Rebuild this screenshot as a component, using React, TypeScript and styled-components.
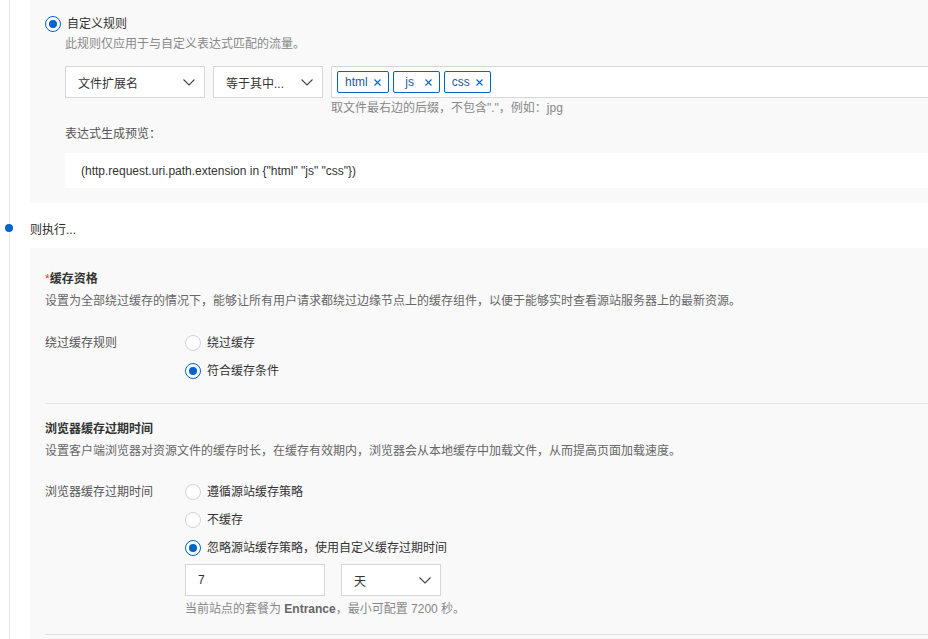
import React from "react";
import styled, { createGlobalStyle } from "styled-components";

const GlobalStyle = createGlobalStyle`
  html, body {
    margin: 0;
    padding: 0;
    background: #ffffff;
    overflow: hidden;
  }
  body {
    font-family: "Liberation Sans", "Noto Sans CJK SC", "Microsoft YaHei", sans-serif;
    font-size: 12px;
    color: #333333;
  }
`;

const BLUE = "#0064c8";

const Page = styled.div`
  width: 980px;
  min-height: 639px;
  display: flex;
  flex-direction: column;
  background: linear-gradient(
    to right,
    transparent 9px,
    #e4e4e4 9px,
    #e4e4e4 10px,
    transparent 10px
  );
  & > * {
    flex-shrink: 0;
  }
`;

const Panel = styled.section<{ $pt: number; $pb: number; $mt?: number }>`
  margin-left: 30px;
  margin-top: ${(p) => p.$mt ?? 0}px;
  background: #f9f9f9;
  padding: ${(p) => p.$pt}px 0 ${(p) => p.$pb}px 15px;
  display: flex;
  flex-direction: column;
  flex-grow: ${(p) => (p.$pb === 0 ? 1 : 0)};
`;

const RadioRow = styled.label`
  display: flex;
  align-items: center;
  gap: 6px;
  height: 20px;
  line-height: 20px;
  color: #333333;
`;

const RadioCircle = styled.span<{ $checked?: boolean }>`
  box-sizing: border-box;
  width: 16px;
  height: 16px;
  border-radius: 50%;
  border: 1px solid ${(p) => (p.$checked ? BLUE : "#d2d2d2")};
  background: #ffffff;
  display: inline-flex;
  align-items: center;
  justify-content: center;
  flex: none;
  &::after {
    content: "";
    width: 8px;
    height: 8px;
    border-radius: 50%;
    background: ${BLUE};
    display: ${(p) => (p.$checked ? "block" : "none")};
  }
`;

const Indented = styled.div`
  padding-left: 20px;
  display: flex;
  flex-direction: column;
`;

const Muted = styled.div<{ $color?: string; $lh?: number; $mt?: number }>`
  color: ${(p) => p.$color ?? "#888888"};
  line-height: ${(p) => p.$lh ?? 20}px;
  margin-top: ${(p) => p.$mt ?? 0}px;
  white-space: nowrap;
`;

const FilterRow = styled.div`
  margin-top: 12px;
  display: flex;
  gap: 8px;
  align-items: flex-start;
`;

const SelectBox = styled.div<{ $w: number }>`
  box-sizing: border-box;
  width: ${(p) => p.$w}px;
  height: 32px;
  border: 1px solid #d6d6d6;
  background: #ffffff;
  display: flex;
  align-items: center;
  justify-content: space-between;
  padding: 0 9px 0 12px;
  color: #333333;
  flex: none;
`;

const TagColumn = styled.div`
  flex: 1;
  display: flex;
  flex-direction: column;
`;

const TagBox = styled.div`
  box-sizing: border-box;
  height: 32px;
  border: 1px solid #d6d6d6;
  background: #ffffff;
  display: flex;
  align-items: center;
  gap: 4px;
  padding-left: 5px;
`;

const Tag = styled.span`
  box-sizing: border-box;
  height: 22px;
  border: 1px solid ${BLUE};
  border-radius: 2px;
  display: inline-flex;
  align-items: center;
  padding: 0 7px 0 7px;
  color: #1f5a9a;
  line-height: 20px;
`;

const TagText = styled.span`
  min-width: 18px;
  text-align: center;
`;

const TagClose = styled.svg`
  margin-left: 6px;
  flex: none;
`;

const PreviewBox = styled.div`
  margin-top: 9px;
  height: 35px;
  background: #ffffff;
  display: flex;
  align-items: center;
  padding-left: 16px;
  color: #333333;
  white-space: nowrap;
`;

const StepHeader = styled.div`
  margin-top: 15px;
  height: 20px;
  display: flex;
  align-items: center;
  gap: 17px;
  color: #2b2b2b;
`;

const Dot = styled.span`
  margin-left: 5px;
  width: 8px;
  height: 8px;
  border-radius: 50%;
  background: ${BLUE};
  flex: none;
`;

const Title = styled.div<{ $mt?: number }>`
  margin-top: ${(p) => p.$mt ?? 0}px;
  line-height: 22px;
  font-weight: 700;
  color: #333333;
`;

const Required = styled.span`
  color: #e33d3d;
  font-weight: 400;
`;

const FormRow = styled.div<{ $mt: number }>`
  margin-top: ${(p) => p.$mt}px;
  display: flex;
  align-items: flex-start;
`;

const FieldLabel = styled.div`
  width: 140px;
  line-height: 20px;
  color: #555555;
  flex: none;
`;

const RadioGroup = styled.div`
  display: flex;
  flex-direction: column;
  & > label + label {
    margin-top: 8px;
  }
`;

const Divider = styled.div<{ $mt: number }>`
  margin-top: ${(p) => p.$mt}px;
  height: 1px;
  background: #e4e4e4;
`;

const CustomExpiry = styled.div`
  margin-top: 6px;
  display: flex;
  flex-direction: column;
`;

const InputRow = styled.div`
  display: flex;
  gap: 16px;
`;

const TextInput = styled.div`
  box-sizing: border-box;
  width: 140px;
  height: 32px;
  border: 1px solid #d6d6d6;
  background: #ffffff;
  display: flex;
  align-items: center;
  padding-left: 12px;
  color: #333333;
`;

const Strong = styled.b`
  font-weight: 700;
  color: #666666;
`;

const Chevron = () => (
  <svg width="12" height="12" viewBox="0 0 12 12">
    <path d="M0.5 3.5 L6 9 L11.5 3.5" fill="none" stroke="#444" strokeWidth="1.1" />
  </svg>
);

const Close = () => (
  <TagClose width="7" height="7" viewBox="0 0 7 7">
    <path d="M0.5 0.5 L6.5 6.5 M6.5 0.5 L0.5 6.5" stroke={BLUE} strokeWidth="1.1" />
  </TagClose>
);

const Radio = ({ checked, children }: { checked?: boolean; children: React.ReactNode }) => (
  <RadioRow>
    <RadioCircle $checked={checked} />
    <span>{children}</span>
  </RadioRow>
);

export default function App() {
  return (
    <>
      <GlobalStyle />
      <Page>
        <Panel $pt={14} $pb={15}>
          <Radio checked>自定义规则</Radio>
          <Indented>
            <Muted>此规则仅应用于与自定义表达式匹配的流量。</Muted>
            <FilterRow>
              <SelectBox $w={140}>
                <span>文件扩展名</span>
                <Chevron />
              </SelectBox>
              <SelectBox $w={110}>
                <span>等于其中...</span>
                <Chevron />
              </SelectBox>
              <TagColumn>
                <TagBox>
                  {["html", "js", "css"].map((t) => (
                    <Tag key={t}>
                      <TagText>{t}</TagText>
                      <Close />
                    </Tag>
                  ))}
                </TagBox>
                <Muted>取文件最右边的后缀，不包含"."，例如：jpg</Muted>
              </TagColumn>
            </FilterRow>
            <Muted $color="#555555" $mt={6}>
              表达式生成预览：
            </Muted>
            <PreviewBox>(http.request.uri.path.extension in {'{"html" "js" "css"}'})</PreviewBox>
          </Indented>
        </Panel>

        <StepHeader>
          <Dot />
          <span>则执行...</span>
        </StepHeader>

        <Panel $pt={20} $pb={0} $mt={10}>
          <Title>
            <Required>*</Required>缓存资格
          </Title>
          <Muted $color="#666666" $lh={22}>
            设置为全部绕过缓存的情况下，能够让所有用户请求都绕过边缘节点上的缓存组件，以便于能够实时查看源站服务器上的最新资源。
          </Muted>
          <FormRow $mt={21}>
            <FieldLabel>绕过缓存规则</FieldLabel>
            <RadioGroup>
              <Radio>绕过缓存</Radio>
              <Radio checked>符合缓存条件</Radio>
            </RadioGroup>
          </FormRow>
          <Divider $mt={22} />
          <Title $mt={14}>浏览器缓存过期时间</Title>
          <Muted $color="#666666" $lh={22}>
            设置客户端浏览器对资源文件的缓存时长，在缓存有效期内，浏览器会从本地缓存中加载文件，从而提高页面加载速度。
          </Muted>
          <FormRow $mt={20}>
            <FieldLabel>浏览器缓存过期时间</FieldLabel>
            <RadioGroup>
              <Radio>遵循源站缓存策略</Radio>
              <Radio>不缓存</Radio>
              <Radio checked>忽略源站缓存策略，使用自定义缓存过期时间</Radio>
              <CustomExpiry>
                <InputRow>
                  <TextInput>7</TextInput>
                  <SelectBox $w={100}>
                    <span>天</span>
                    <Chevron />
                  </SelectBox>
                </InputRow>
                <Muted $mt={3}>
                  当前站点的套餐为 <Strong>Entrance</Strong>，最小可配置 7200 秒。
                </Muted>
              </CustomExpiry>
            </RadioGroup>
          </FormRow>
          <Divider $mt={15} />
        </Panel>
      </Page>
    </>
  );
}
